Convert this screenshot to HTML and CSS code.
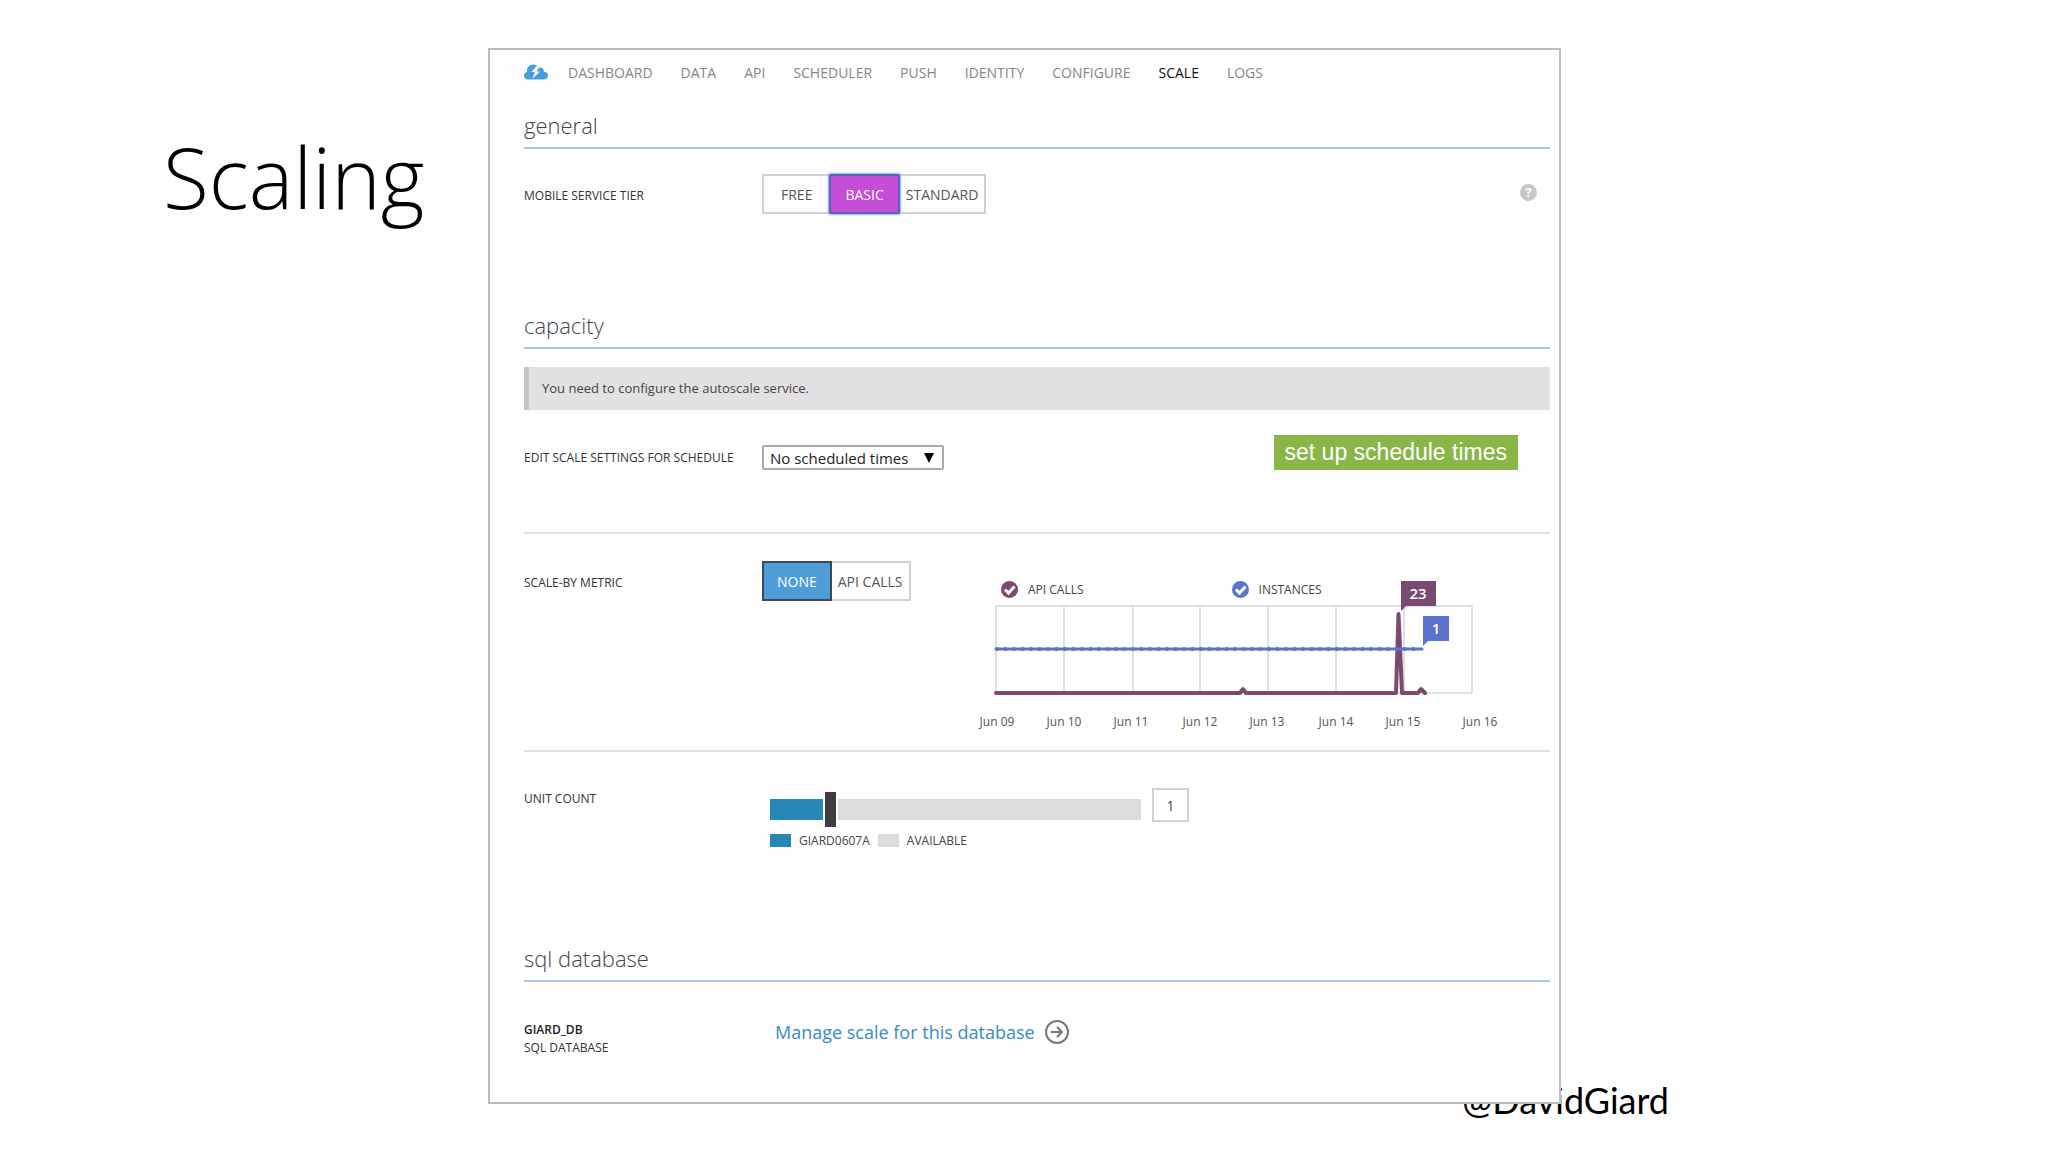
FILE: index.html
```html
<!DOCTYPE html>
<html lang="en">
<head>
    <meta charset="UTF-8">
    <meta name="viewport" content="width=device-width, initial-scale=1.0">
    <title>Scaling</title>
    <link rel="stylesheet" href="styles.css">
</head>
<body>
    <main class="slide">
        <h1>Scaling</h1>

        <div class="panel">
            <nav class="tabs">
                <svg class="cloud" width="24" height="16" viewBox="0 0 24 16" aria-hidden="true">
                    <path fill="#4a9fdb" d="M4 15.500C1.500 15.500 0 13.800 0 11.800c0-2 1.200-3.400 3-3.800C2.500 3.800 5 .5 9 .5c2.600 0 4.400 1.200 5.300 3.200 3.300-.8 5.700 1 5.700 4 2.500 0 4 1.700 4 3.900 0 2.300-1.600 3.900-4 3.900z"/>
                    <path fill="#fff" d="M13 1.500L7.500 8h3.300l-2.300 6.500L16 7.500h-3.500l2.500-4z"/>
                </svg>
                <a href="#">DASHBOARD</a>
                <a href="#">DATA</a>
                <a href="#">API</a>
                <a href="#">SCHEDULER</a>
                <a href="#">PUSH</a>
                <a href="#">IDENTITY</a>
                <a href="#">CONFIGURE</a>
                <a href="#" class="active">SCALE</a>
                <a href="#">LOGS</a>
            </nav>

            <section>
                <h2>general</h2>
                <div class="row tier-row">
                    <span class="label">MOBILE SERVICE TIER</span>
                    <div class="toggle">
                        <button type="button">FREE</button>
                        <button type="button" class="basic">BASIC</button>
                        <button type="button" class="tight">STANDARD</button>
                    </div>
                    <button type="button" class="help" aria-label="Help">?</button>
                </div>
            </section>

            <section>
                <h2>capacity</h2>
                <div class="notice">You need to configure the autoscale service.</div>

                <div class="row schedule-row">
                    <label class="label" for="schedule">EDIT SCALE SETTINGS FOR SCHEDULE</label>
                    <div class="select-box">
                        <select id="schedule">
                            <option>No scheduled times</option>
                        </select>
                        <svg width="10" height="10" viewBox="0 0 10 10" aria-hidden="true"><path d="M0 0h10L5 10z"/></svg>
                    </div>
                    <button type="button" class="setup">set up schedule times</button>
                </div>

                <div class="row metric-row">
                    <span class="label">SCALE-BY METRIC</span>
                    <div class="toggle">
                        <button type="button" class="none">NONE</button>
                        <button type="button" class="tight">API CALLS</button>
                    </div>
                    <div class="chart">
                        <div class="chart-legend">
                            <label>
                                <span class="check calls">
                                    <input type="checkbox" checked>
                                    <svg width="17" height="17" viewBox="0 0 17 17" aria-hidden="true"><path d="M4 8.500l3.500 3.500L13.500 5.500"/></svg>
                                </span>
                                API CALLS
                            </label>
                            <label>
                                <span class="check instances">
                                    <input type="checkbox" checked>
                                    <svg width="17" height="17" viewBox="0 0 17 17" aria-hidden="true"><path d="M4 8.500l3.500 3.500L13.500 5.500"/></svg>
                                </span>
                                INSTANCES
                            </label>
                        </div>
                        <svg class="plot" viewBox="0 0 530 134">
                            <path class="grid" d="M21 5h476v87H21zM89 5v87M158 5v87M225 5v87M293 5v87M361 5v87M429 5v87"/>
                            <path class="calls-line" d="M21 92H265l3-4 3 4H421L423.500 13 427 92H443l3-4 4 4"/>
                            <path class="instances-line" d="M21 48H447"/>
                            <path class="instances-dots" d="M22 48H447"/>
                            <path fill="#7b4a70" d="M426-20h35v25h-30l-5 5z"/>
                            <path fill="#5b73cd" d="M448 15h26v25h-21l-5 5z"/>
                            <text class="flag" x="443" y="-2">23</text>
                            <text class="flag" x="461" y="33">1</text>
                            <g class="axis">
                                <text x="22" y="125">Jun 09</text>
                                <text x="89" y="125">Jun 10</text>
                                <text x="156" y="125">Jun 11</text>
                                <text x="225" y="125">Jun 12</text>
                                <text x="292" y="125">Jun 13</text>
                                <text x="361" y="125">Jun 14</text>
                                <text x="428" y="125">Jun 15</text>
                                <text x="505" y="125">Jun 16</text>
                            </g>
                        </svg>
                    </div>
                </div>

                <div class="row unit-row">
                    <label class="label" for="units">UNIT COUNT</label>
                    <div class="units">
                        <div class="slider">
                            <input type="range" id="units" min="0" max="6.5" step="0.5" value="1">
                            <input type="text" class="count" value="1" aria-label="Unit count value">
                        </div>
                        <div class="unit-legend">
                            <i class="swatch used"></i><span>GIARD0607A</span>
                            <i class="swatch"></i><span>AVAILABLE</span>
                        </div>
                    </div>
                </div>
            </section>

            <section>
                <h2>sql database</h2>
                <div class="row db-row">
                    <div class="label"><strong>GIARD_DB</strong><br>SQL DATABASE</div>
                    <a href="#" class="manage">
                        Manage scale for this database
                        <svg width="26" height="26" viewBox="0 0 26 26" aria-hidden="true">
                            <circle cx="13" cy="13" r="11"/>
                            <path d="M7 13h11M13 8l5 5-5 5"/>
                        </svg>
                    </a>
                </div>
            </section>
        </div>
    </main>
    <footer>@DavidGiard</footer>
</body>
</html>
```

FILE: styles.css
```css
* {
    box-sizing: border-box;
}

body {
    font-family: "Open Sans", "Noto Sans", sans-serif;
    margin: 0;
    background-color: #fefefe;
    color: #444;
}

button, input, select {
    font-family: inherit;
    margin: 0;
    padding: 0;
}

.slide {
    display: grid;
    grid-template-columns: 325px 1fr;
    padding: 48px 487px 0 163px;
}

h1 {
    margin: 72px 0 0;
    font-size: 84px;
    font-weight: 300;
    line-height: 114px;
    color: #000;
}

.panel {
    position: relative;
    z-index: 1;
    padding: 0 9px 45px 34px;
    border: 2px solid #bdbcbf;
    background-color: #fefefe;
}

/* Tabs */
.tabs {
    display: flex;
    align-items: center;
    gap: 28px;
    height: 44px;
    font-size: 14px;
}

.cloud {
    margin-right: -8px;
}

.tabs a {
    color: #868686;
    text-decoration: none;
}

.tabs a.active {
    color: #111;
    font-weight: 500;
}

/* Sections */
section {
    margin-top: 96px;
}

.tabs + section {
    margin-top: 18px;
}

h2 {
    margin: 0;
    padding-bottom: 9px;
    border-bottom: 2px solid #a6c8e4;
    font-size: 22px;
    font-weight: 300;
    line-height: 26px;
}

.row {
    display: flex;
    align-items: flex-start;
}

.label {
    flex: 0 0 238px;
    font-size: 12px;
    font-weight: 500;
    line-height: 18px;
    color: #333;
}

.toggle {
    display: flex;
    border: 2px solid #d2d0d4;
}

.toggle button {
    height: 36px;
    padding: 0 17px;
    border: 0;
    background: none;
    font-size: 14px;
    color: #555;
}

.toggle button.tight {
    padding: 0 6px;
}

.toggle button.basic {
    margin: -2px 0;
    height: 40px;
    padding: 0 14px;
    border: 2px solid #5b62b8;
    border-radius: 2px;
    box-shadow: 0 0 2px 1px #7eb0ee;
    background-color: #c64dd8;
    color: #fff;
}

.toggle button.none {
    margin: -2px 0 -2px -2px;
    height: 40px;
    padding: 0 13px;
    border: 2px solid #3c4a58;
    background-color: #4f9dd8;
    color: #fff;
}

.tier-row {
    padding: 25px 0 2px;
}

.tier-row .label,
.metric-row .label {
    line-height: 44px;
}

.tier-row .toggle {
    height: 40px;
}

.tier-row {
    height: 67px;
}

.help {
    width: 17px;
    height: 17px;
    margin: 10px 13px 0 auto;
    border: 0;
    border-radius: 50%;
    background-color: #c6c6c6;
    color: #fff;
    font-size: 13px;
    font-weight: 700;
    line-height: 17px;
}

.notice {
    margin-top: 18px;
    padding-left: 13px;
    border-left: 5px solid #c6c4c7;
    background-color: #e3e1e3;
    font-size: 13px;
    font-weight: 500;
    line-height: 43px;
}

.schedule-row {
    align-items: flex-end;
    padding: 25px 0 62px;
    border-bottom: 2px solid #e0dfe2;
}

.schedule-row .label {
    line-height: 25px;
}

.select-box {
    display: grid;
    align-items: center;
    width: 182px;
}

.select-box select,
.select-box svg {
    grid-area: 1 / 1;
}

.select-box select {
    appearance: none;
    height: 25px;
    padding-left: 6px;
    border: 2px solid #aaa;
    border-radius: 2px;
    background-color: #fff;
    font-size: 15px;
    color: #222;
}

.select-box svg {
    justify-self: end;
    margin-right: 10px;
    pointer-events: none;
}

.setup {
    height: 35px;
    margin: 0 32px 0 auto;
    padding: 0 11px;
    border: 0;
    background-color: #8ab648;
    font-family: "Liberation Sans", Arial, sans-serif;
    font-size: 23px;
    color: #fff;
}

/* Metric chart */
.metric-row {
    padding: 27px 0 15px;
    border-bottom: 2px solid #e0dfe2;
}

.chart {
    flex: 0 1 530px;
    margin: 16px 45px 0 auto;
}

.chart-legend {
    display: flex;
    gap: 148px;
    height: 24px;
    padding-left: 26px;
    font-size: 12px;
}

.chart-legend label {
    display: flex;
    align-items: center;
    gap: 10px;
}

.check {
    display: grid;
}

.check input,
.check svg {
    grid-area: 1 / 1;
}

.check input {
    appearance: none;
    width: 17px;
    height: 17px;
    border-radius: 50%;
}

.check.calls input {
    background-color: #7b4a70;
}

.check.instances input {
    background-color: #5b73cd;
}

.check path {
    fill: none;
    stroke: #fff;
    stroke-width: 3;
}

.plot {
    display: block;
    width: 100%;
    overflow: visible;
}

.plot .grid {
    fill: none;
    stroke: #e2dfe4;
    stroke-width: 2;
}

.calls-line,
.instances-line,
.instances-dots {
    fill: none;
    stroke-linecap: round;
    stroke-linejoin: round;
}

.calls-line {
    stroke: #7b4a70;
    stroke-width: 4;
}

.instances-line {
    stroke: #5b73cd;
    stroke-width: 3;
}

.instances-dots {
    stroke: #5b73cd;
    stroke-width: 4;
    stroke-dasharray: 0 8.500;
}

.flag {
    fill: #fff;
    font-size: 15px;
    font-weight: 600;
    text-anchor: middle;
}

.axis {
    fill: #555;
    font-size: 12px;
    text-anchor: middle;
}

/* Unit count */
.unit-row {
    padding-top: 36px;
}

.unit-row .label {
    line-height: 22px;
}

.units {
    padding-left: 8px;
}

.slider {
    display: flex;
    align-items: flex-start;
    gap: 11px;
}

.slider input[type="range"] {
    appearance: none;
    width: 371px;
    height: 43px;
    background: linear-gradient(to right, #2787b6 60px, #dddbde 60px) center / 100% 21px no-repeat;
}

.slider input[type="range"]::-webkit-slider-thumb {
    appearance: none;
    width: 11px;
    height: 35px;
    background-color: #403d42;
    box-shadow: -2px 0 #fefefe, 2px 0 #fefefe;
}

.count {
    width: 37px;
    height: 34px;
    border: 2px solid #d2d0d4;
    background-color: #fff;
    font-size: 14px;
    text-align: center;
    color: #444;
}

.unit-legend {
    display: flex;
    align-items: center;
    height: 18px;
    gap: 8px;
    font-size: 12px;
}

.swatch {
    width: 21px;
    height: 13px;
    background-color: #dddbde;
}

.swatch.used {
    background-color: #2787b6;
}

/* Database */
.db-row {
    padding-top: 37px;
}

.db-row .label {
    padding-top: 2px;
    font-weight: 400;
}

.db-row strong {
    font-weight: 600;
    color: #222;
}

.manage {
    display: flex;
    align-items: center;
    gap: 9px;
    margin-left: 13px;
    font-size: 18px;
    font-weight: 500;
    line-height: 26px;
    color: #3a8bc4;
    text-decoration: none;
}

.manage svg {
    fill: none;
    stroke: #777;
    stroke-width: 2;
}

footer {
    margin-top: -26px;
    padding-right: 379px;
    font-family: Lato, sans-serif;
    font-size: 36px;
    line-height: 44px;
    text-align: right;
    color: #000;
}
```
